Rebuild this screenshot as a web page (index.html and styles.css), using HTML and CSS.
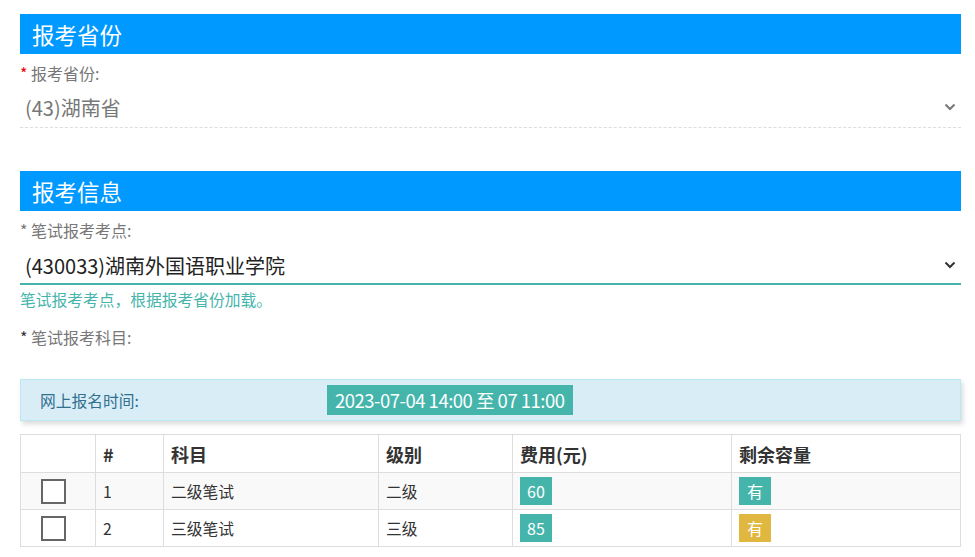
FILE: index.html
```html
<!DOCTYPE html>
<html lang="zh">
<head>
<meta charset="utf-8">
<link rel="stylesheet" href="styles.css">
</head>
<body>
<div class="page">
  <section class="sec">
    <h2 class="sec-title">报考省份</h2>
    <div class="label"><span class="req">*</span> 报考省份:</div>
    <div class="select select-muted">
      <span>(43)湖南省</span>
      <svg class="chev" width="12" height="8" viewBox="0 0 12 8"><path d="M1.5 1.5 L6 6 L10.5 1.5" fill="none" stroke="#777" stroke-width="2"/></svg>
    </div>
  </section>

  <section class="sec sec2">
    <h2 class="sec-title">报考信息</h2>
    <div class="label">* 笔试报考考点:</div>
    <div class="select select-active">
      <span>(430033)湖南外国语职业学院</span>
      <svg class="chev" width="12" height="8" viewBox="0 0 12 8"><path d="M1.5 1.5 L6 6 L10.5 1.5" fill="none" stroke="#333" stroke-width="2"/></svg>
    </div>
    <div class="help">笔试报考考点，根据报考省份加载。</div>
    <div class="label label3"><span class="req-dark">*</span> 笔试报考科目:</div>

    <div class="alert">
      <span class="alert-label">网上报名时间:</span>
      <span class="alert-badge">2023-07-04 14:00 至 07 11:00</span>
    </div>

    <table class="tbl">
      <thead>
        <tr>
          <th class="c-chk"></th>
          <th class="c-num">#</th>
          <th class="c-sub">科目</th>
          <th class="c-lvl">级别</th>
          <th class="c-fee">费用(元)</th>
          <th>剩余容量</th>
        </tr>
      </thead>
      <tbody>
        <tr class="odd">
          <td class="c-chk"><span class="chk"></span></td>
          <td>1</td>
          <td>二级笔试</td>
          <td>二级</td>
          <td><span class="badge teal">60</span></td>
          <td><span class="badge teal">有</span></td>
        </tr>
        <tr>
          <td class="c-chk"><span class="chk"></span></td>
          <td>2</td>
          <td>三级笔试</td>
          <td>三级</td>
          <td><span class="badge teal">85</span></td>
          <td><span class="badge yellow">有</span></td>
        </tr>
      </tbody>
    </table>
  </section>
</div>
</body>
</html>
```

FILE: styles.css
```css
* { box-sizing: border-box; }
html, body { margin: 0; padding: 0; background: #fff; }
body {
  font-family: "Noto Sans CJK SC", "Noto Sans", sans-serif;
  color: #333;
}
.page {
  padding: 14px 14px 0 20px;
}
.sec-title {
  margin: 0;
  height: 40px;
  line-height: 40px;
  background: #0099ff;
  color: #fff;
  font-size: 22.5px;
  font-weight: normal;
  padding-left: 12px;
}
.sec2 { margin-top: 43px; }
.label {
  margin-top: 8px;
  font-size: 16px;
  line-height: 22px;
  color: #777;
}
.req { color: #e00; }
.req-dark { color: #333; }
.select {
  display: flex;
  align-items: center;
  justify-content: space-between;
  padding: 0 5px 0 5px;
  font-size: 20px;
}
.select-muted {
  color: #777;
  height: 44px;
  padding-top: 3px;
  border-bottom: 1px dashed #ddd;
}
.select-active {
  color: #222;
  height: 44px;
  padding-top: 6px;
  border-bottom: 2px solid #45b5ab;
}
.help {
  margin-top: 4px;
  font-size: 15.75px;
  line-height: 22px;
  color: #45b5ab;
}
.label3 { margin-top: 15px; }
.alert {
  margin-top: 31px;
  height: 42px;
  display: flex;
  align-items: center;
  background: #d9edf7;
  border: 1px solid #bce8f1;
  box-shadow: 2px 3px 5px rgba(0,0,0,0.15);
  padding-left: 19px;
}
.alert-label {
  width: 287px;
  font-size: 15.75px;
  color: #31708f;
}
.alert-badge {
  background: #45b5ab;
  color: #fff;
  font-size: 18.5px;
  letter-spacing: -0.5px;
  line-height: 30px;
  height: 30px;
  padding: 0 8px;
}
.tbl {
  margin-top: 13px;
  width: 100%;
  border-collapse: collapse;
  font-size: 15.75px;
}
.tbl th, .tbl td {
  border: 1px solid #ddd;
  text-align: left;
  padding: 0 7px;
}
.tbl th {
  height: 38px;
  font-size: 18px;
  font-weight: bold;
  color: #333;
}
.tbl td { height: 37px; color: #333; }
.tbl tr.odd td { background: #f9f9f9; }
.c-chk { width: 75px; }
.c-num { width: 68px; }
.c-sub { width: 215px; }
.c-lvl { width: 134px; }
.c-fee { width: 219px; }
.tbl td.c-chk { padding-left: 20px; }
.chk {
  display: block;
  width: 25px;
  height: 25px;
  border: 2px solid #666;
  background: #fff;
}
.badge {
  display: inline-block;
  vertical-align: middle;
  height: 28px;
  line-height: 28px;
  min-width: 32px;
  text-align: center;
  color: #fff;
  font-size: 16px;
  padding: 0 7px;
}
.teal { background: #45b5ab; }
.yellow { background: #e0b840; }
```
